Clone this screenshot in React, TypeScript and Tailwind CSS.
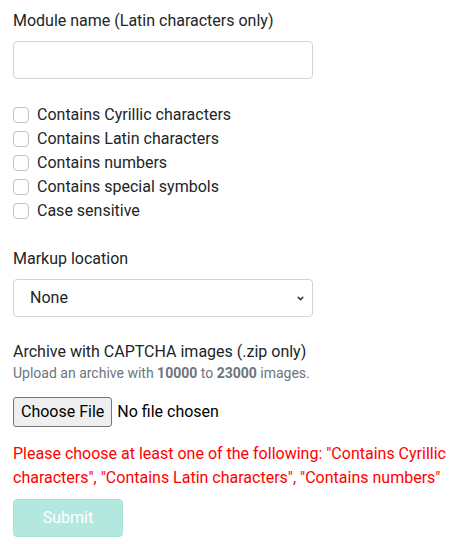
import { ChevronDown } from 'lucide-react';

const options = [
  'Contains Cyrillic characters',
  'Contains Latin characters',
  'Contains numbers',
  'Contains special symbols',
  'Case sensitive',
];

export default function App() {
  return (
    <div className="w-[458px] h-[544px] bg-white pl-[13px] pt-[9px] text-[16px] leading-6 text-[#212529] font-['Roboto',sans-serif]">
      {/* Module name */}
      <label className="block mb-2">Module name (Latin characters only)</label>
      <input
        type="text"
        className="block w-[300px] h-[38px] px-3 border border-[#ced4da] rounded-[4px] outline-none"
      />

      {/* Checkboxes */}
      <div className="mt-[24px]">
        {options.map((o) => (
          <label key={o} className="flex items-center gap-2 h-6">
            <span className="w-4 h-4 border border-[#bfc3c7] rounded-[4px] bg-white shrink-0" />
            <span>{o}</span>
          </label>
        ))}
      </div>

      {/* Markup location */}
      <label className="block mt-[24px] mb-2">Markup location</label>
      <div className="relative w-[300px] h-[38px] border border-[#ced4da] rounded-[4px] flex items-center pl-4">
        <span>None</span>
        <ChevronDown className="absolute right-[7px] top-[14px] w-[9px] h-[9px] text-[#343a40]" strokeWidth={4} />
      </div>

      {/* Archive */}
      <div className="mt-[23px]">Archive with CAPTCHA images (.zip only)</div>
      <div className="text-[14px] leading-[18px] text-[#6c757d]">
        Upload an archive with <b className="font-bold">10000</b> to <b className="font-bold">23000</b> images.
      </div>
      <div className="mt-[15px] flex items-center gap-[5px]">
        <button className="h-[30px] px-[7px] bg-[#efefef] border border-[#767676] rounded-[3px] text-[#000]">
          Choose File
        </button>
        <span className="text-[#000]">No file chosen</span>
      </div>

      {/* Error */}
      <p className="mt-[15px] w-[440px] text-[#ff0000]">
        Please choose at least one of the following: "Contains Cyrillic characters", "Contains Latin characters", "Contains numbers"
      </p>

      <button className="mt-[9px] w-[110px] h-[38px] bg-[#b3e8df] border border-[#a6e3d8] rounded-[4px] text-white">
        Submit
      </button>
    </div>
  );
}
